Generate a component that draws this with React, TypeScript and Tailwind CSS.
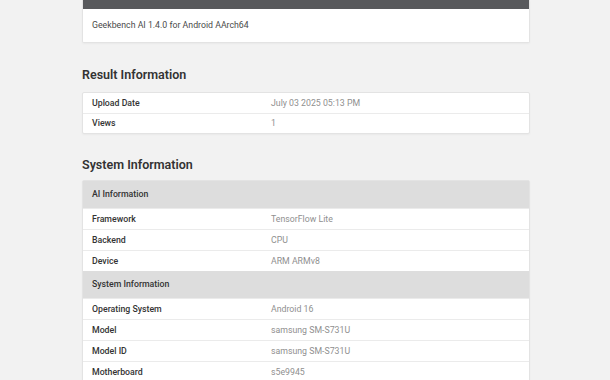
import React from "react";

type Row = { label: string; value: string };

function DataRow({ row, first, h }: { row: Row; first?: boolean; h: string }) {
  return (
    <div
      className={`flex items-center pl-[9px] pt-[1px] ${h} ${first ? "" : "border-t border-[#ebebeb]"}`}
    >
      <div className="w-[179px] text-[8.75px] font-medium text-[#333]">{row.label}</div>
      <div className="text-[8.75px] text-[#8f8f8f]">{row.value}</div>
    </div>
  );
}

function GroupHeader({ title }: { title: string }) {
  return (
    <div className="flex items-center pl-[9px] pt-[1px] h-[27px] bg-[#dddddd] text-[8.75px] font-medium text-[#333]">
      {title}
    </div>
  );
}

export default function App() {
  const result: Row[] = [
    { label: "Upload Date", value: "July 03 2025 05:13 PM" },
    { label: "Views", value: "1" },
  ];
  const ai: Row[] = [
    { label: "Framework", value: "TensorFlow Lite" },
    { label: "Backend", value: "CPU" },
    { label: "Device", value: "ARM ARMv8" },
  ];
  const sys: Row[] = [
    { label: "Operating System", value: "Android 16" },
    { label: "Model", value: "samsung SM-S731U" },
    { label: "Model ID", value: "samsung SM-S731U" },
    { label: "Motherboard", value: "s5e9945" },
  ];
  return (
    <div className="min-h-screen bg-[#f2f2f2] font-['Roboto',sans-serif] overflow-hidden h-[380px]">
      <div className="w-[448px] ml-[82px]">
        <div className="bg-white border-x border-b border-[#e3e3e3] rounded-b-[2px] shadow-[0_1px_2px_rgba(0,0,0,0.04)]">
          <div className="h-[9px] bg-[#58595c]" />
          <div className="h-[33px] flex items-center pl-[9px] text-[8.75px] text-[#4a4a4a]">
            Geekbench AI 1.4.0 for Android AArch64
          </div>
        </div>

        <div className="pt-[24px] pb-[9px] h-[49px]">
          <h2 className="text-[12.5px] leading-[16px] font-semibold text-[#333]">Result Information</h2>
        </div>

        <div className="bg-white border border-[#e3e3e3] rounded-[2px] shadow-[0_1px_2px_rgba(0,0,0,0.04)]">
          {result.map((r, i) => (
            <DataRow key={r.label} row={r} first={i === 0} h="h-[20px]" />
          ))}
        </div>

        <div className="pt-[23px] pb-[7px] h-[46px]">
          <h2 className="text-[12.5px] leading-[16px] font-semibold text-[#333]">System Information</h2>
        </div>

        <div className="bg-white border border-[#e3e3e3] rounded-[2px] shadow-[0_1px_2px_rgba(0,0,0,0.04)]">
          <GroupHeader title="AI Information" />
          {ai.map((r) => (
            <DataRow key={r.label} row={r} h="h-[21px]" />
          ))}
          <GroupHeader title="System Information" />
          {sys.map((r) => (
            <DataRow key={r.label} row={r} h="h-[21px]" />
          ))}
        </div>
      </div>
    </div>
  );
}
